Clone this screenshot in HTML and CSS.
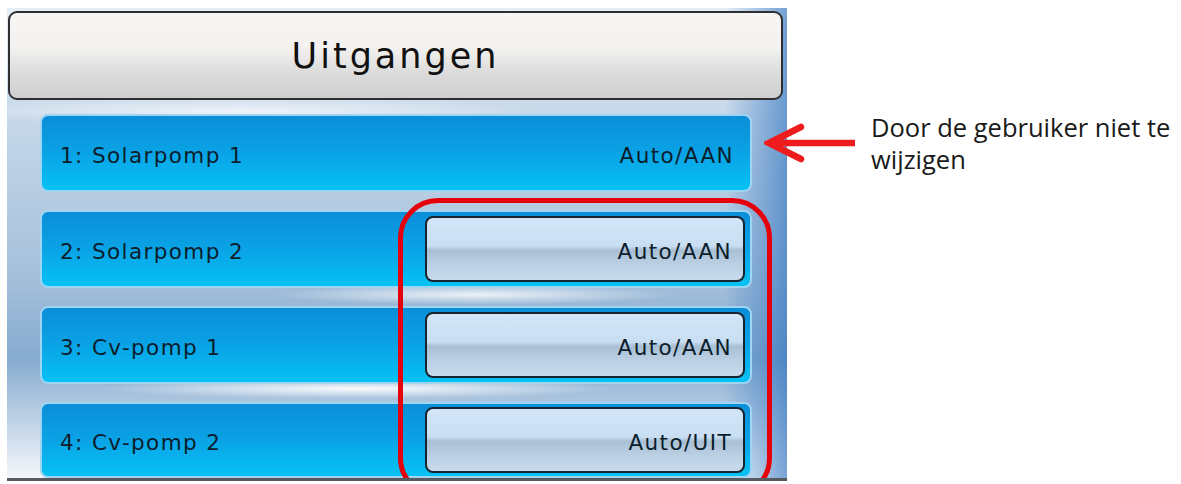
FILE: index.html
```html
<!DOCTYPE html>
<html lang="nl">
<head>
    <meta charset="UTF-8">
    <title>Uitgangen</title>
    <link rel="stylesheet" href="styles.css">
</head>
<body>
    <div class="page">
        <div class="screen">
            <div class="header">Uitgangen</div>
            <div class="rows">
                <div class="row">
                    <span class="name">1: Solarpomp 1</span>
                    <span class="state">Auto/AAN</span>
                </div>
                <div class="row">
                    <span class="name">2: Solarpomp 2</span>
                    <span class="button">Auto/AAN</span>
                </div>
                <div class="row">
                    <span class="name">3: Cv-pomp 1</span>
                    <span class="button">Auto/AAN</span>
                </div>
                <div class="row">
                    <span class="name">4: Cv-pomp 2</span>
                    <span class="button">Auto/UIT</span>
                </div>
            </div>
            <div class="highlight"></div>
        </div>

        <div class="note">
            <svg class="arrow" width="92" height="46" viewBox="0 0 92 46">
                <path d="M91 23 H10" stroke="#ee1c1c" stroke-width="6.5" fill="none"/>
                <path d="M37 7 L5 23 L37 39" stroke="#ee1c1c" stroke-width="6.5" fill="none" stroke-linecap="round" stroke-linejoin="miter"/>
            </svg>
            <p>Door de gebruiker niet te wijzigen</p>
        </div>
    </div>
</body>
</html>
```

FILE: styles.css
```css
body {
    margin: 0;
    background-color: #ffffff;
    font-family: "DejaVu Sans", sans-serif;
}

.page {
    display: flex;
    align-items: flex-start;
    padding: 8px 0 0 7px;
}

/* Display panel */
.screen {
    position: relative;
    flex-shrink: 0;
    width: 780px;
    height: 473px;
    box-sizing: border-box;
    border-bottom: 3px solid #555b60;
    background:
        radial-gradient(ellipse 260px 10px at 45% 81%, rgba(255,255,255,0.95), rgba(255,255,255,0)),
        radial-gradient(ellipse 200px 10px at 60% 61%, rgba(255,255,255,0.8), rgba(255,255,255,0)),
        radial-gradient(ellipse 300px 14px at 30% 22%, rgba(255,255,255,0.7), rgba(255,255,255,0)),
        linear-gradient(90deg, rgba(255,255,255,0) 0%, rgba(255,255,255,0) 92%, rgba(40,110,190,0.6) 100%),
        linear-gradient(180deg, #e6eef6 0%, #c4d6e8 25%, #a8c2dc 55%, #86abd0 75%, #f4f7fb 100%);
    overflow: hidden;
}

.header {
    margin: 3px 4px 0 1px;
    height: 89px;
    box-sizing: border-box;
    border: 2px solid #2d2f33;
    border-radius: 9px;
    background: linear-gradient(180deg, #f7f6f4 0%, #f3f2f0 40%, #dcdcdc 70%, #cfcfcf 100%);
    display: flex;
    align-items: center;
    justify-content: center;
    font-size: 35px;
    color: #111;
    letter-spacing: 3px;
}

.rows {
    display: flex;
    flex-direction: column;
    gap: 18px;
    margin: 14px 0 0 33px;
    width: 712px;
}

.row {
    height: 78px;
    box-sizing: border-box;
    border: 2px solid #9fd4f2;
    border-radius: 8px;
    background: linear-gradient(180deg, #0a8ed8 0%, #0aa3e6 50%, #05c2f4 100%);
    display: flex;
    align-items: center;
    justify-content: space-between;
    padding: 0 18px 0 18px;
    font-size: 21.5px;
    letter-spacing: 1.4px;
    color: #0c1d2c;
}

.row:nth-child(4) {
    height: 76px;
}

.name {
    padding-top: 4px;
}

.state {
    padding-top: 4px;
    margin-right: -2px;
}

.button {
    width: 320px;
    height: 66px;
    box-sizing: border-box;
    margin-right: -13px;
    border: 2px solid #17232e;
    border-radius: 8px;
    background: linear-gradient(180deg, #d2e6f8 0%, #c9def2 45%, #a8bfd4 52%, #bcd0e4 75%, #c9dcee 100%);
    display: flex;
    align-items: center;
    justify-content: flex-end;
    padding: 4px 11px 0 0;
}

/* Red marking around the changeable buttons */
.highlight {
    position: absolute;
    left: 391px;
    top: 190px;
    width: 374px;
    height: 300px;
    box-sizing: border-box;
    border: 5px solid #e6000b;
    border-radius: 40px;
}

/* Annotation on the right */
.note {
    position: relative;
    display: flex;
    align-items: flex-start;
    margin-left: -23px;
}

.arrow {
    margin-top: 112px;
}

.note p {
    margin: 103px 0 0 15px;
    width: 320px;
    font-family: "Open Sans", "Liberation Sans", sans-serif;
    font-size: 25.5px;
    line-height: 32px;
    color: #1a1a1a;
}
```
